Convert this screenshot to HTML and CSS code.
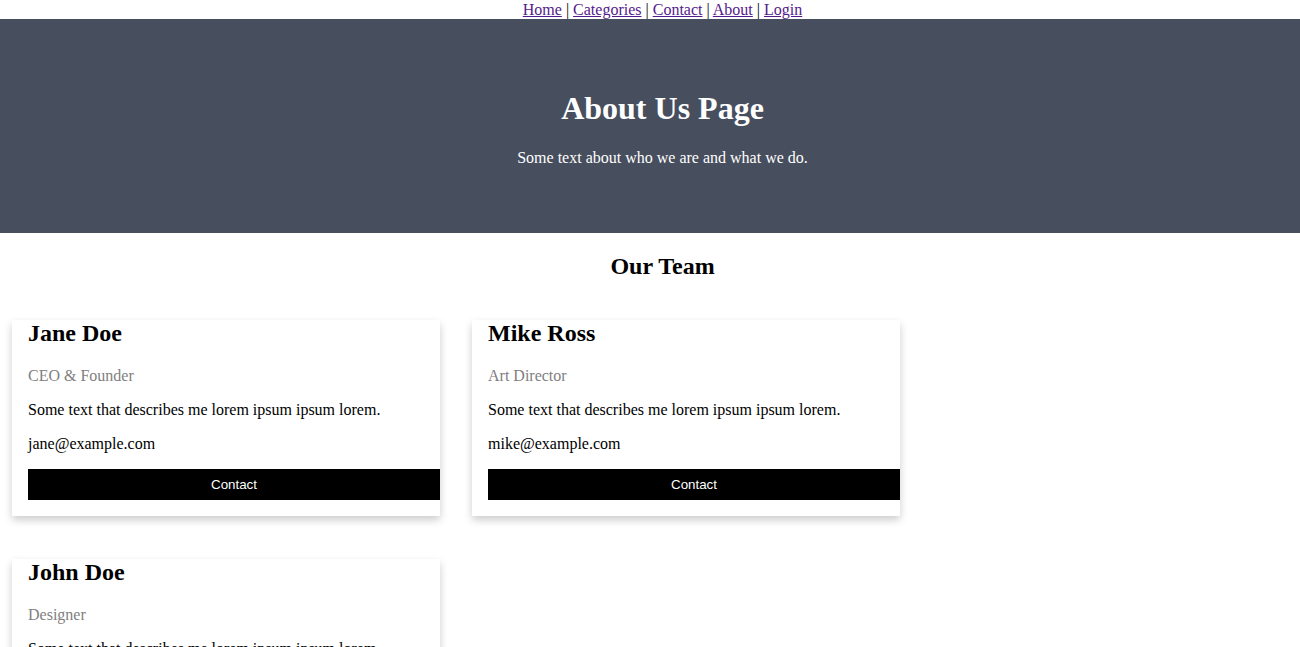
FILE: index.html
```html
<!DOCTYPE html>
<html lang="en">
<head>
<meta charset="utf-8">
<title>About Us</title>
<link rel="stylesheet" href="styles.css">
</head>
<body>
<div class="page">
  <nav class="topnav">
    <a href="#">Home</a> | <a href="#">Categories</a> | <a href="#">Contact</a> | <a href="#">About</a> | <a href="#">Login</a>
  </nav>

  <section class="about">
    <h1 class="about-title">About Us Page</h1>
    <p class="about-text">Some text about who we are and what we do.</p>
  </section>

  <h2 class="team-title">Our Team</h2>

  <div class="team">
    <div class="card">
      <h2 class="name">Jane Doe</h2>
      <p class="role">CEO &amp; Founder</p>
      <p class="text">Some text that describes me lorem ipsum ipsum lorem.</p>
      <p class="text">jane@example.com</p>
      <div class="action"><button class="button">Contact</button></div>
    </div>
    <div class="card">
      <h2 class="name">Mike Ross</h2>
      <p class="role">Art Director</p>
      <p class="text">Some text that describes me lorem ipsum ipsum lorem.</p>
      <p class="text">mike@example.com</p>
      <div class="action"><button class="button">Contact</button></div>
    </div>
    <div class="card">
      <h2 class="name">John Doe</h2>
      <p class="role">Designer</p>
      <p class="text">Some text that describes me lorem ipsum ipsum lorem.</p>
      <p class="text">john@example.com</p>
      <div class="action"><button class="button">Contact</button></div>
    </div>
  </div>
</div>
</body>
</html>
```

FILE: styles.css
```css
html {
  overflow: hidden;
}

body {
  margin: 0;
  font-family: "Liberation Serif", "Times New Roman", serif;
  font-size: 16px;
  color: #000;
  background: #fff;
}

.page {
  width: 1325px;
}

.topnav {
  text-align: center;
  line-height: 19px;
  height: 19px;
}

.topnav a {
  color: #551a8b;
  text-decoration: underline;
}

.about {
  padding: 50px;
  text-align: center;
  background-color: #474e5d;
  color: #fff;
}

.about-title {
  font-size: 32px;
  font-weight: bold;
  margin: 21.44px 0;
}

.about-text {
  margin: 16px 0;
}

.team-title {
  text-align: center;
  font-size: 24px;
  margin: 19.92px 0;
}

.team {
  display: flex;
  flex-wrap: wrap;
  width: 1300px;
  box-sizing: border-box;
  padding: 20px 0 0 12px;
  column-gap: 32px;
  row-gap: 43px;
}

.card {
  width: 428px;
  box-sizing: border-box;
  padding: 0 16px 16px;
  box-shadow: 0 4px 8px 0 rgba(0, 0, 0, 0.2);
  background: #fff;
}

.name {
  font-size: 24px;
  font-weight: bold;
  margin: 0 0 19.92px;
}

.role {
  color: grey;
  margin: 0 0 16px;
}

.text {
  margin: 0 0 16px;
}

.action {
  margin: 0;
}

.button {
  display: block;
  box-sizing: content-box;
  width: 100%;
  border: none;
  outline: 0;
  padding: 8px;
  color: #fff;
  background-color: #000;
  text-align: center;
  cursor: pointer;
  font-family: "Liberation Sans", Arial, sans-serif;
  font-size: 13.333px;
  line-height: 15px;
}
```
